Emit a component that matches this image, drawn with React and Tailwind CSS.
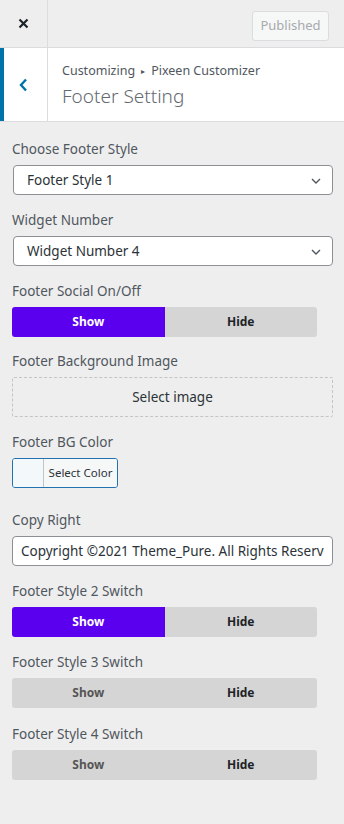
import React, { useState } from "react";

const font = { fontFamily: '"Noto Sans", "Open Sans", sans-serif' };

const ChevronDown = () => (
    <svg width="10" height="6" viewBox="0 0 10 6" className="absolute right-[11px] top-[12px] pointer-events-none">
        <path d="M1 1l4 4 4-4" fill="none" stroke="#50575e" strokeWidth="1.4" />
    </svg>
);

const Label = ({ children }) => (
    <div className="text-[13.5px] leading-[19px] text-[#50575e] mb-[6px]">{children}</div>
);

const Select = ({ value }) => (
    <div className="relative ml-px w-[320px] h-[30px] bg-white border border-[#8c8f94] rounded-[4px] flex items-center pl-[13px] text-[13.5px] text-[#2c3338]">
        {value}
        <ChevronDown />
    </div>
);

const Toggle = ({ on, onChange }) => (
    <div className="flex w-[305px] h-[30px] rounded-[3px] overflow-hidden bg-[#d5d5d5] text-[12px] font-bold">
        <button
            onClick={() => onChange(true)}
            className={on ? "flex-1 bg-[#5b00ef] text-white" : "flex-1 text-[#555]"}
        >
            Show
        </button>
        <button onClick={() => onChange(false)} className="flex-1 text-[#1d2327]">
            Hide
        </button>
    </div>
);

export default function App() {
    const [social, setSocial] = useState(true);
    const [s2, setS2] = useState(true);
    const [s3, setS3] = useState(false);
    const [s4, setS4] = useState(false);
    const [copy, setCopy] = useState("Copyright ©2021 Theme_Pure. All Rights Reserved");

    return (
        <div style={font} className="w-[344px] min-h-[824px] bg-[#eeeeee]">
            {/* top bar */}
            <div className="h-[48px] flex border-b border-[#dcdcde] bg-[#eeeeee]">
                <button className="w-[48px] h-full border-r border-[#dcdcde] flex items-center justify-center">
                    <svg width="11" height="11" viewBox="0 0 11 11">
                        <path d="M1.5 1.5l8 8M9.5 1.5l-8 8" stroke="#1d2327" strokeWidth="2.2" />
                    </svg>
                </button>
                <div className="flex-1 flex items-start justify-end pr-[15px] pt-[11px]">
                    <button className="w-[77px] h-[30px] border border-[#dcdcde] bg-[#f6f7f7] rounded-[3px] text-[13px] text-[#a7aaad]">
                        Published
                    </button>
                </div>
            </div>

            {/* section header */}
            <div className="h-[74px] flex bg-white border-b border-[#dcdcde]">
                <button className="w-[48px] h-full border-l-4 border-[#0073aa] border-r border-r-[#dcdcde] flex items-center justify-center pr-[4px]">
                    <svg width="9" height="14" viewBox="0 0 9 14">
                        <path d="M7 1.5L2 7l5 5.5" fill="none" stroke="#0073aa" strokeWidth="2.4" />
                    </svg>
                </button>
                <div className="pl-[14px] pt-[14px]">
                    <div className="text-[12.5px] leading-[18px] text-[#50575e] flex items-center">
                        Customizing
                        <span className="text-[8px] mx-[6px] text-[#50575e]">▸</span>
                        Pixeen Customizer
                    </div>
                    <div className="text-[19px] leading-[28px] font-light text-[#646970] mt-[2px]">Footer Setting</div>
                </div>
            </div>

            {/* controls */}
            <div className="px-3 pt-[18px] pb-10">
                <div className="mb-[16px]">
                    <Label>Choose Footer Style</Label>
                    <Select value="Footer Style 1" />
                </div>
                <div className="mb-[16px]">
                    <Label>Widget Number</Label>
                    <Select value="Widget Number 4" />
                </div>
                <div className="mb-[15px]">
                    <Label>Footer Social On/Off</Label>
                    <Toggle on={social} onChange={setSocial} />
                </div>
                <div className="mb-[16px]">
                    <Label>Footer Background Image</Label>
                    <button className="w-[321px] h-[40px] border border-dashed border-[#c3c4c7] text-[13.5px] text-[#2c3338] rounded-[2px]">
                        Select image
                    </button>
                </div>
                <div className="mb-[23px]">
                    <Label>Footer BG Color</Label>
                    <div className="w-[106px] h-[30px] flex border border-[#2271b1] rounded-[3px] overflow-hidden">
                        <div className="w-[31px] bg-[#f3f8fb] border-r border-[#c3c4c7]" />
                        <div className="flex-1 bg-[#f6f7f7] text-[11.5px] text-[#2c3338] flex items-center justify-center">
                            Select Color
                        </div>
                    </div>
                </div>
                <div className="mb-[16px]">
                    <Label>Copy Right</Label>
                    <input
                        value={copy}
                        onChange={(e) => setCopy(e.target.value)}
                        className="w-[321px] h-[30px] bg-white border border-[#8c8f94] rounded-[4px] px-[8px] text-[13.5px] text-[#2c3338] outline-none"
                    />
                </div>
                <div className="mb-[16px]">
                    <Label>Footer Style 2 Switch</Label>
                    <Toggle on={s2} onChange={setS2} />
                </div>
                <div className="mb-[17px]">
                    <Label>Footer Style 3 Switch</Label>
                    <Toggle on={s3} onChange={setS3} />
                </div>
                <div>
                    <Label>Footer Style 4 Switch</Label>
                    <Toggle on={s4} onChange={setS4} />
                </div>
            </div>
        </div>
    );
}
